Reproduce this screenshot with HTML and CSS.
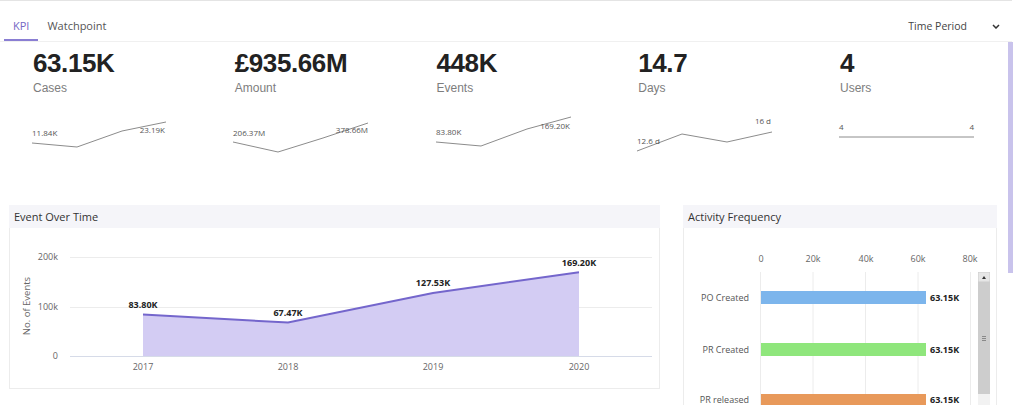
FILE: index.html
```html
<!DOCTYPE html>
<html>
<head>
<meta charset="utf-8">
<link rel="stylesheet" href="styles.css">
</head>
<body>
<div class="page">
  <header class="tabbar">
    <nav class="tabs">
      <div class="tab active">KPI</div>
      <div class="tab">Watchpoint</div>
    </nav>
    <div class="period">
      <span>Time Period</span>
      <svg class="chev" width="8" height="5" viewBox="0 0 8 5"><path d="M1 1 L4 4 L7 1" fill="none" stroke="#333" stroke-width="1.5"/></svg>
    </div>
  </header>
  <div class="body">
    <main class="content">
      <section class="kpis">
        <div class="kpi">
          <div class="kpi-value">63.15K</div>
          <div class="kpi-label">Cases</div>
          <svg class="spark" width="140" height="50" viewBox="0 0 140 50">
            <polyline points="-1,33 44,37 89,21 133,12"/>
            <text x="-1" y="26">11.84K</text>
            <text x="132" y="23" text-anchor="end">23.19K</text>
          </svg>
        </div>
        <div class="kpi">
          <div class="kpi-value">£935.66M</div>
          <div class="kpi-label">Amount</div>
          <svg class="spark" width="140" height="50" viewBox="0 0 140 50">
            <polyline points="-2,32 43,42 88,28 133,13"/>
            <text x="-2" y="26">206.37M</text>
            <text x="133" y="23" text-anchor="end">378.66M</text>
          </svg>
        </div>
        <div class="kpi">
          <div class="kpi-value">448K</div>
          <div class="kpi-label">Events</div>
          <svg class="spark" width="140" height="50" viewBox="0 0 140 50">
            <polyline points="-1,32 44,36 90,19 134,7"/>
            <text x="-1" y="25">83.80K</text>
            <text x="133" y="19" text-anchor="end">169.20K</text>
          </svg>
        </div>
        <div class="kpi">
          <div class="kpi-value">14.7</div>
          <div class="kpi-label">Days</div>
          <svg class="spark" width="140" height="50" viewBox="0 0 140 50">
            <polyline points="-1,41 44,24 89,32 134,22"/>
            <text x="-1" y="34">12.6 d</text>
            <text x="133" y="14" text-anchor="end">16 d</text>
          </svg>
        </div>
        <div class="kpi">
          <div class="kpi-value">4</div>
          <div class="kpi-label">Users</div>
          <svg class="spark" width="140" height="50" viewBox="0 0 140 50">
            <polyline points="-1,27 134,27"/>
            <text x="-1" y="20">4</text>
            <text x="134" y="20" text-anchor="end">4</text>
          </svg>
        </div>
      </section>

      <section class="charts">
        <div class="panel panel-events">
          <div class="panel-head">Event Over Time</div>
          <div class="panel-body">
            <svg class="chart" width="651" height="160" viewBox="0 0 651 160">
              <line class="grid" x1="61" y1="29.5" x2="643" y2="29.5"/>
              <line class="grid" x1="61" y1="79.5" x2="643" y2="79.5"/>
              <line class="axis" x1="61" y1="128.5" x2="643" y2="128.5"/>
              <text class="ylab" x="49" y="32" text-anchor="end">200k</text>
              <text class="ylab" x="49" y="82" text-anchor="end">100k</text>
              <text class="ylab" x="49" y="131" text-anchor="end">0</text>
              <text class="ytitle" x="21" y="78" text-anchor="middle" transform="rotate(-90 21 78)">No. of Events</text>
              <polygon class="area" points="134,128 134,86.5 279,94.6 424,64.9 570,44.2 570,128"/>
              <polyline class="line" points="134,86.5 279,94.6 424,64.9 570,44.2"/>
              <text class="dlab" x="134" y="80" text-anchor="middle">83.80K</text>
              <text class="dlab" x="279" y="88" text-anchor="middle">67.47K</text>
              <text class="dlab" x="424" y="58" text-anchor="middle">127.53K</text>
              <text class="dlab" x="570" y="38" text-anchor="middle">169.20K</text>
              <text class="xlab" x="134" y="142" text-anchor="middle">2017</text>
              <text class="xlab" x="279" y="142" text-anchor="middle">2018</text>
              <text class="xlab" x="424" y="142" text-anchor="middle">2019</text>
              <text class="xlab" x="570" y="142" text-anchor="middle">2020</text>
            </svg>
          </div>
        </div>
        <div class="panel panel-activity">
          <div class="panel-head">Activity Frequency</div>
          <div class="panel-body">
            <svg class="chart" width="314" height="190" viewBox="0 0 314 190">
              <line class="vgrid" x1="77.5" y1="44" x2="77.5" y2="190"/>
              <line class="vgrid" x1="130" y1="44" x2="130" y2="190"/>
              <line class="vgrid" x1="182.5" y1="44" x2="182.5" y2="190"/>
              <line class="vgrid" x1="235" y1="44" x2="235" y2="190"/>
              <line class="vgrid" x1="287.5" y1="44" x2="287.5" y2="190"/>
              <text class="ylab" x="78" y="34" text-anchor="middle">0</text>
              <text class="ylab" x="130" y="34" text-anchor="middle">20k</text>
              <text class="ylab" x="183" y="34" text-anchor="middle">40k</text>
              <text class="ylab" x="235" y="34" text-anchor="middle">60k</text>
              <text class="ylab" x="287" y="34" text-anchor="middle">80k</text>
              <rect x="78" y="63" width="165" height="13" fill="#7cb5ec"/>
              <rect x="78" y="115" width="165" height="13" fill="#8fe67c"/>
              <rect x="78" y="166" width="165" height="13" fill="#e8995a"/>
              <text class="cat" x="66" y="73" text-anchor="end">PO Created</text>
              <text class="cat" x="66" y="125" text-anchor="end">PR Created</text>
              <text class="cat" x="66" y="175" text-anchor="end">PR released</text>
              <text class="dlab" x="247" y="73">63.15K</text>
              <text class="dlab" x="247" y="125">63.15K</text>
              <text class="dlab" x="247" y="175">63.15K</text>
              <rect x="295" y="44" width="12" height="146" fill="#f2f2f2"/>
              <rect x="295" y="44" width="12" height="122" fill="#cdcdcd"/>
              <rect x="295.5" y="44.5" width="11" height="9" fill="#e6e6e6"/>
              <path d="M299 51 L301 48 L303 51 Z" fill="#333"/>
              <path d="M299 108.5 H303 M299 110.5 H303 M299 112.5 H303" stroke="#777" stroke-width="0.8"/>
            </svg>
          </div>
        </div>
      </section>
    </main>
    <div class="rail"><div class="thumb"></div></div>
  </div>
</div>
</body>
</html>
```

FILE: styles.css
```css
* { box-sizing: border-box; }
html, body {
  margin: 0;
  padding: 0;
  background: #fff;
}
body {
  font-family: "Liberation Sans", Arial, sans-serif;
  color: #333;
  width: 1024px;
  height: 405px;
  overflow: hidden;
}
.page {
  width: 1024px;
  height: 405px;
  display: flex;
  flex-direction: column;
}
.tabbar {
  width: 1012px;
  height: 42px;
  border-top: 1px solid #e4e4e4;
  border-bottom: 1px solid #f0f0f0;
  display: flex;
  justify-content: space-between;
  align-items: stretch;
  flex: none;
}
.tabs {
  display: flex;
  padding-left: 4px;
}
.tab {
  font-family: "Open Sans", sans-serif;
  font-size: 11px;
  color: #555;
  padding: 10px 9px 0;
  height: 40px;
  display: flex;
  align-items: center;
  border-bottom: 2px solid transparent;
}
.tab.active {
  color: #7567c4;
  border-bottom-color: #8a7ed3;
}
.period {
  display: flex;
  align-items: center;
  padding-top: 10px;
  padding-right: 12px;
  font-family: "Open Sans", sans-serif;
  font-size: 10.5px;
  color: #444;
  height: 40px;
}
.period .chev {
  margin-left: 25px;
}
.body {
  flex: 1;
  display: flex;
  min-height: 0;
}
.content {
  width: 1007px;
  overflow: hidden;
}
.rail {
  width: 17px;
  padding-left: 1px;
}
.thumb {
  width: 5px;
  height: 231px;
  background: #c9c3ec;
}
.kpis {
  display: grid;
  grid-template-columns: repeat(5, 201.75px);
  padding: 6px 0 45px 33px;
}
.kpi-value {
  font-size: 26px;
  line-height: 30px;
  font-weight: bold;
  letter-spacing: -0.4px;
  color: #222;
}
.kpi-label {
  font-size: 12px;
  line-height: 14px;
  margin-top: 3px;
  color: #7d7d7d;
}
.spark {
  display: block;
  margin-top: 15px;
  overflow: visible;
}
.spark polyline {
  fill: none;
  stroke: #8c8c8c;
  stroke-width: 1;
}
.spark text {
  font-family: "Open Sans", sans-serif;
  font-size: 8px;
  fill: #555;
}
.charts {
  display: flex;
  gap: 23px;
  padding-left: 9px;
  align-items: flex-start;
}
.panel-events { width: 651px; }
.panel-activity { width: 314px; }
.panel-head {
  height: 23px;
  background: #f5f5f9;
  font-family: "Open Sans", sans-serif;
  font-size: 11px;
  color: #333;
  padding-left: 5px;
  display: flex;
  align-items: center;
}
.panel-body {
  border: 1px solid #ececec;
  border-top: none;
  background: #fff;
}
.panel-events .panel-body { height: 161px; }
.panel-activity .panel-body { height: 190px; }
.chart {
  display: block;
  margin-left: -1px;
}
.chart text {
  font-family: "Open Sans", sans-serif;
}
.grid { stroke: #ececec; stroke-width: 1; }
.axis { stroke: #d6dbe8; stroke-width: 1; }
.vgrid { stroke: #ececec; stroke-width: 1; }
.ylab, .xlab {
  font-size: 9px;
  fill: #666;
}
.ytitle {
  font-size: 9.5px;
  fill: #666;
}
.cat {
  font-size: 9px;
  fill: #555;
}
.area { fill: #d3ccf3; }
.line {
  fill: none;
  stroke: #7466cc;
  stroke-width: 2;
}
.dlab {
  font-size: 9px;
  font-weight: bold;
  fill: #222;
}
```
